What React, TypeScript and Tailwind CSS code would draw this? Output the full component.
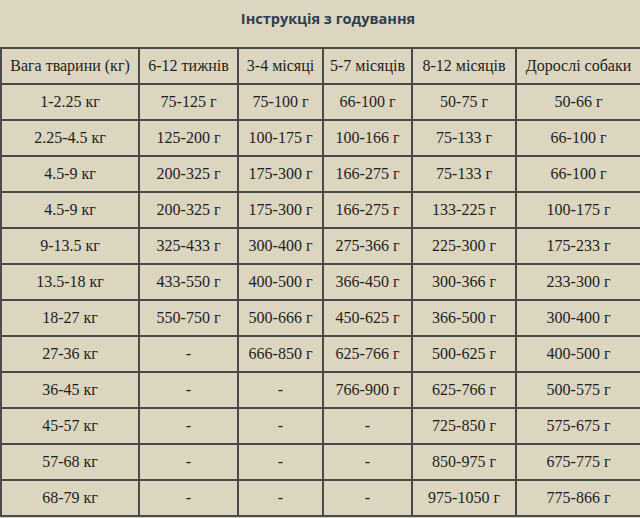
import React from 'react';

const headers = ['Вага тварини (кг)', '6-12 тижнів', '3-4 місяці', '5-7 місяців', '8-12 місяців', 'Дорослі собаки'];

const rows: string[][] = [
  ['1-2.25 кг', '75-125 г', '75-100 г', '66-100 г', '50-75 г', '50-66 г'],
  ['2.25-4.5 кг', '125-200 г', '100-175 г', '100-166 г', '75-133 г', '66-100 г'],
  ['4.5-9 кг', '200-325 г', '175-300 г', '166-275 г', '75-133 г', '66-100 г'],
  ['4.5-9 кг', '200-325 г', '175-300 г', '166-275 г', '133-225 г', '100-175 г'],
  ['9-13.5 кг', '325-433 г', '300-400 г', '275-366 г', '225-300 г', '175-233 г'],
  ['13.5-18 кг', '433-550 г', '400-500 г', '366-450 г', '300-366 г', '233-300 г'],
  ['18-27 кг', '550-750 г', '500-666 г', '450-625 г', '366-500 г', '300-400 г'],
  ['27-36 кг', '-', '666-850 г', '625-766 г', '500-625 г', '400-500 г'],
  ['36-45 кг', '-', '-', '766-900 г', '625-766 г', '500-575 г'],
  ['45-57 кг', '-', '-', '-', '725-850 г', '575-675 г'],
  ['57-68 кг', '-', '-', '-', '850-975 г', '675-775 г'],
  ['68-79 кг', '-', '-', '-', '975-1050 г', '775-866 г'],
];

const widths = ['w-[138px]', 'w-[99px]', 'w-[85px]', 'w-[89px]', 'w-[104px]', 'w-[125px]'];

export default function App() {
  return (
    <div className="w-[640px] h-[518px] bg-[#dcd5c0] overflow-hidden">
      <h3 className="pt-[8px] h-[47px] pl-[16px] text-center text-[14.5px] font-bold text-[#2c3e50] font-['Open_Sans',sans-serif]">
        Інструкція з годування
      </h3>
      <table className="w-[640px] table-fixed border-collapse font-['Liberation_Serif',serif] text-[16px] text-[#1e1e1e]">
        <colgroup>
          {widths.map((w, i) => (
            <col key={i} className={w} />
          ))}
        </colgroup>
        <thead>
          <tr className="h-[36px]">
            {headers.map((h) => (
              <th key={h} className="border-2 border-[#4a4a4a] font-normal text-center p-0 whitespace-nowrap">
                {h}
              </th>
            ))}
          </tr>
        </thead>
        <tbody>
          {rows.map((row, r) => (
            <tr key={r} className="h-[36px]">
              {row.map((cell, c) => (
                <td key={c} className="border-2 border-[#4a4a4a] text-center p-0 whitespace-nowrap">
                  {cell}
                </td>
              ))}
            </tr>
          ))}
        </tbody>
      </table>
    </div>
  );
}
